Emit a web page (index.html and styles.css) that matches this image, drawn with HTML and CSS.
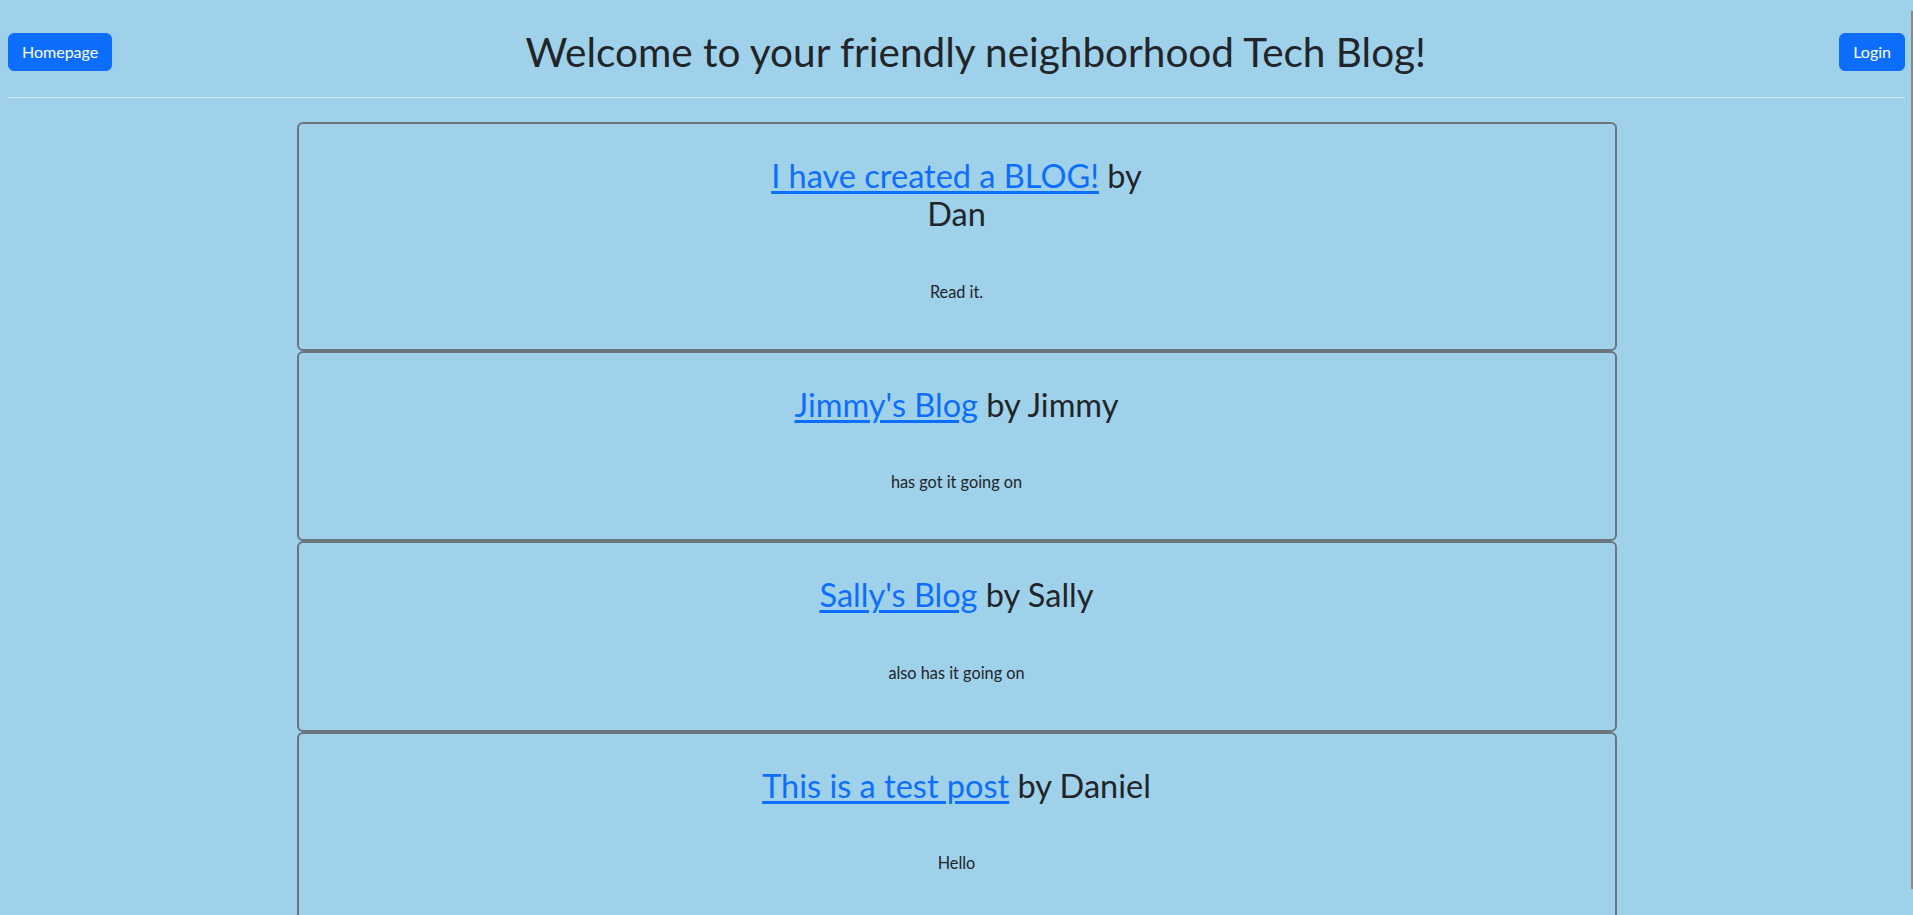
FILE: index.html
```html
<!DOCTYPE html>
<html lang="en">
<head>
<meta charset="utf-8">
<title>Tech Blog</title>
<link rel="stylesheet" href="styles.css">
</head>
<body>
<div class="page">
  <header class="topbar">
    <a class="btn" href="#">Homepage</a>
    <h1 class="site-title">Welcome to your friendly neighborhood Tech Blog!</h1>
    <a class="btn" href="#">Login</a>
  </header>
  <hr class="divider">
  <main class="container">
    <article class="post">
      <h2 class="post-title"><a href="#">I have created a BLOG!</a> by Dan</h2>
      <p class="post-body">Read it.</p>
    </article>
    <article class="post">
      <h2 class="post-title"><a href="#">Jimmy's Blog</a> by Jimmy</h2>
      <p class="post-body">has got it going on</p>
    </article>
    <article class="post">
      <h2 class="post-title"><a href="#">Sally's Blog</a> by Sally</h2>
      <p class="post-body">also has it going on</p>
    </article>
    <article class="post">
      <h2 class="post-title"><a href="#">This is a test post</a> by Daniel</h2>
      <p class="post-body">Hello</p>
    </article>
  </main>
</div>
<div class="scroll-edge"></div>
</body>
</html>
```
FILE: styles.css
```css
html {
  overflow: hidden;
}
body {
  margin: 0;
  background: #9fd1ea;
  color: #212529;
  font-family: "Segoe UI", Lato, "Noto Sans", sans-serif;
  font-size: 16px;
  line-height: 1.5;
}
.page {
  padding: 8px 8px 0;
}
.topbar {
  display: flex;
  align-items: center;
  padding-top: 20px;
}
.btn {
  display: inline-block;
  background: #0d6efd;
  color: #fff;
  text-decoration: none;
  border: 1px solid #0d6efd;
  border-radius: 6px;
  padding: 6px 13px;
  font-size: 16px;
  line-height: 24px;
}
.site-title {
  flex: 1;
  margin: 0;
  text-align: center;
  font-weight: 400;
  font-size: 40.5px;
  line-height: 48px;
}
.divider {
  margin: 21px 0 24px;
  border: 0;
  border-top: 1px solid #cfe7f3;
  height: 0;
}
.container {
  width: 1320px;
  margin: 0 auto;
}
.post {
  border: 2px solid #6c757d;
  border-radius: 6px;
  padding: 33px 16px 45px;
  text-align: center;
}
.post-title {
  width: 416px;
  margin: 0 auto 46px;
  font-weight: 400;
  font-size: 32.5px;
  line-height: 38.4px;
}
.post-title a {
  color: #0d6efd;
  text-decoration: underline;
  text-underline-offset: 3px;
}
.post-body {
  margin: 0;
  font-size: 16.3px;
  line-height: 24px;
}
.scroll-edge {
  position: fixed;
  right: 0;
  top: 11px;
  width: 2px;
  height: 878px;
  background: #8a8a8a;
}
```
